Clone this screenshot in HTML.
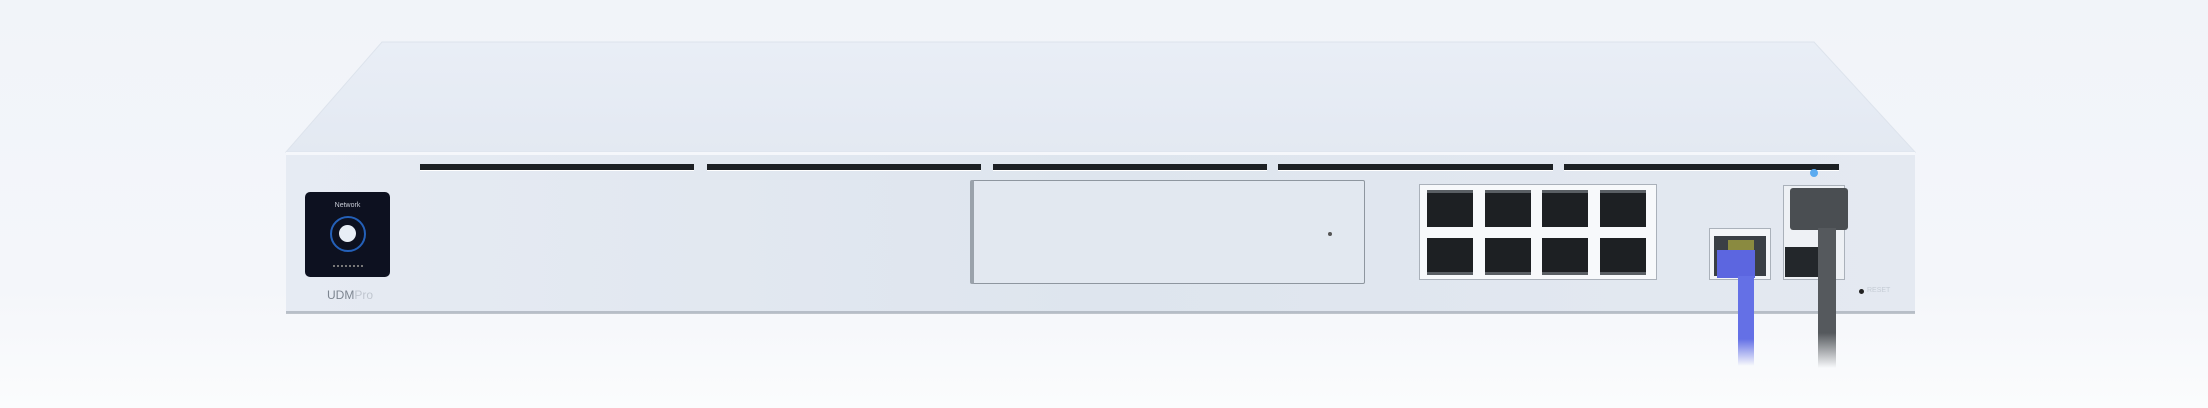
<!DOCTYPE html>
<html><head><style>
html,body{margin:0;padding:0}
body{width:2208px;height:408px;position:relative;overflow:hidden;background:linear-gradient(#f1f4f9 0%,#f4f6fa 70%,#fbfcfd 100%);font-family:"Liberation Sans",sans-serif}
.a{position:absolute}
.slot{position:absolute;top:164px;height:6px;background:#1c2024;border-bottom:1px solid #fff}
.port{position:absolute;width:46px;height:34px;background:#1d2023;border-top:3px solid #5a5f64}
.lbl{position:absolute;font-size:9px;color:#c5ccd5}
</style></head><body>
<svg class="a" style="left:0;top:0" width="2208" height="408">
<defs>
<linearGradient id="tf" x1="0" y1="0" x2="0" y2="1"><stop offset="0" stop-color="#e9eef6"/><stop offset="1" stop-color="#e3e9f2"/></linearGradient>
<linearGradient id="ff" x1="0" y1="0" x2="1" y2="0"><stop offset="0" stop-color="#e6ebf3"/><stop offset="0.5" stop-color="#dee5ee"/><stop offset="1" stop-color="#e4e9f1"/></linearGradient>
</defs>
<polygon points="382,42 1814,42 1915,152 286,152" fill="url(#tf)" stroke="#dde3ec" stroke-width="1"/>
<rect x="286" y="152" width="1629" height="161" fill="url(#ff)"/>
<rect x="286" y="152" width="1629" height="3" fill="#f5f7fb"/>
<rect x="286" y="311" width="1629" height="3" fill="#9aa2ab" opacity="0.6"/>
</svg>
<div class="slot" style="left:420px;width:274px"></div>
<div class="slot" style="left:707px;width:274px"></div>
<div class="slot" style="left:993px;width:274px"></div>
<div class="slot" style="left:1278px;width:275px"></div>
<div class="slot" style="left:1564px;width:275px"></div>
<div class="a" style="left:305px;top:192px;width:85px;height:85px;background:#0d1120;border-radius:5px"></div>
<div class="a" style="left:305px;top:202px;width:85px;text-align:center;font-size:7px;color:#c8ccd6">Network</div>
<div class="a" style="left:330px;top:216px;width:32px;height:32px;border:2px solid #2460b8;border-radius:50%"></div>
<div class="a" style="left:339px;top:225px;width:17px;height:17px;background:#e8eef6;border-radius:50%"></div>
<div class="a" style="left:333px;top:265px;width:30px;height:2px;background:repeating-linear-gradient(90deg,#777 0 2px,transparent 2px 4px)"></div>
<div class="a" style="left:327px;top:288px;font-size:12px;color:#7d8590">UDM<span style="color:#c0c6cf">Pro</span></div>
<div class="a" style="left:970px;top:180px;width:395px;height:104px;background:#e2e8f0;border:1px solid #8e969f;border-left:4px solid #9aa2ab;border-radius:2px;box-sizing:border-box"></div>
<div class="a" style="left:1328px;top:232px;width:4px;height:4px;background:#555;border-radius:50%"></div>
<div class="a" style="left:1419px;top:184px;width:238px;height:96px;background:#f7f9fb;border:1px solid #aab1ba;box-sizing:border-box"></div>
<div class="port" style="left:1427px;top:190px"></div>
<div class="port" style="left:1485px;top:190px"></div>
<div class="port" style="left:1542px;top:190px"></div>
<div class="port" style="left:1600px;top:190px"></div>
<div class="port" style="left:1427px;top:238px;border-top:0;border-bottom:3px solid #5a5f64"></div>
<div class="port" style="left:1485px;top:238px;border-top:0;border-bottom:3px solid #5a5f64"></div>
<div class="port" style="left:1542px;top:238px;border-top:0;border-bottom:3px solid #5a5f64"></div>
<div class="port" style="left:1600px;top:238px;border-top:0;border-bottom:3px solid #5a5f64"></div>
<div class="a" style="left:1709px;top:228px;width:62px;height:52px;background:#f3f5f8;border:1px solid #aab1ba;box-sizing:border-box"></div>
<div class="a" style="left:1714px;top:236px;width:52px;height:40px;background:#3a3f45"></div>
<div class="a" style="left:1728px;top:240px;width:26px;height:10px;background:#8a8a40"></div>
<div class="a" style="left:1717px;top:250px;width:38px;height:28px;background:#5c66e0"></div>
<div class="a" style="left:1738px;top:276px;width:16px;height:90px;background:linear-gradient(#6470e6 70%,rgba(100,112,230,0))"></div>
<div class="a" style="left:1783px;top:185px;width:62px;height:95px;background:#eef1f5;border:1px solid #aab1ba;box-sizing:border-box"></div>
<div class="a" style="left:1785px;top:247px;width:38px;height:30px;background:#23272b"></div>
<div class="a" style="left:1790px;top:188px;width:58px;height:42px;background:#4a4e52;border-radius:3px"></div>
<div class="a" style="left:1818px;top:228px;width:18px;height:140px;background:linear-gradient(#55595d 75%,rgba(85,89,93,0))"></div>
<div class="a" style="left:1810px;top:169px;width:8px;height:8px;background:#5aaaf0;border-radius:50%"></div>
<div class="a" style="left:1859px;top:289px;width:5px;height:5px;background:#222;border-radius:50%"></div>
<div class="lbl" style="left:1867px;top:287px;font-size:7px">RESET</div>
</body></html>
